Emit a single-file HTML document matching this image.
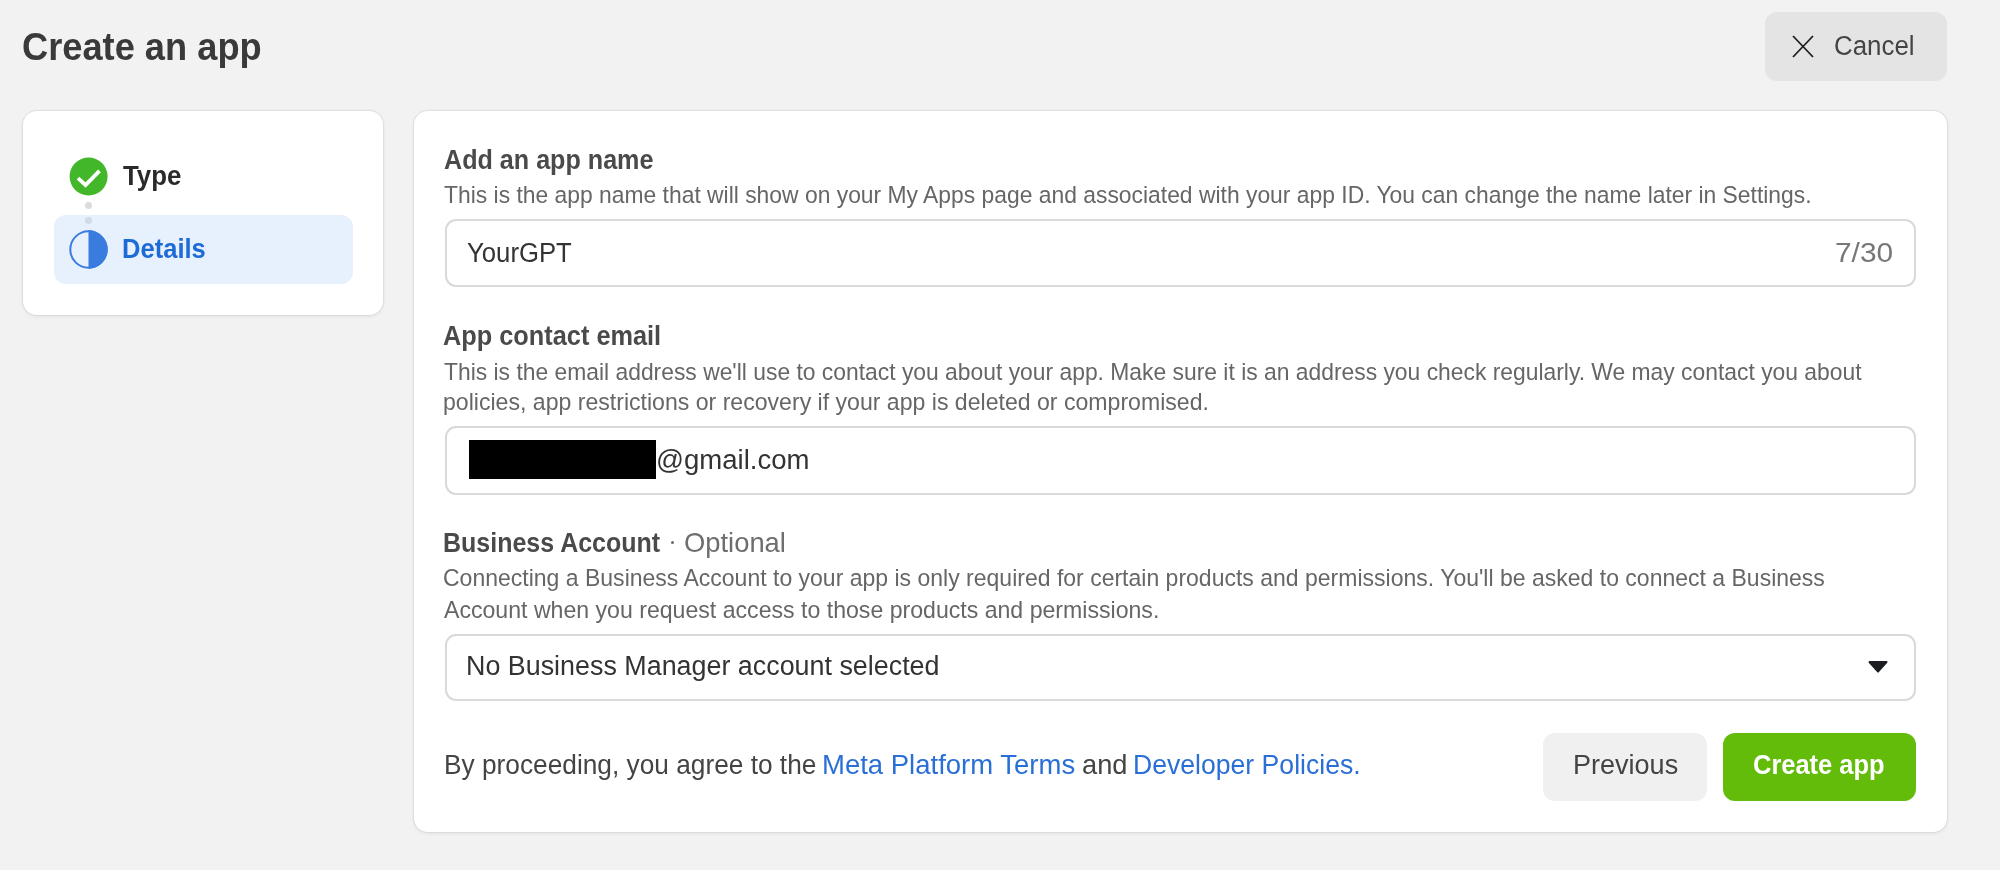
<!DOCTYPE html>
<html><head><meta charset="utf-8">
<style>
html,body{margin:0;padding:0;}
body{width:2000px;height:870px;overflow:hidden;background:#f2f2f2;position:relative;font-family:"Liberation Sans",sans-serif;}
.t{position:absolute;white-space:nowrap;line-height:1;transform-origin:0 0;filter:blur(0.45px);}
.abs{position:absolute;box-sizing:border-box;}
.card{background:#fff;border-radius:14px;box-shadow:0 0 1.5px 1px rgba(0,0,0,0.075),0 1.5px 4px rgba(0,0,0,0.05);}
.inp{background:#fff;border:2px solid #d9d9d9;border-radius:11px;}
</style></head>
<body>
<div class="abs" style="left:1765px;top:12px;width:182px;height:69px;border-radius:12px;background:#e4e4e4;"></div>
<svg class="abs" style="left:1790px;top:34px" width="26" height="25" viewBox="0 0 26 25"><path d="M3 2 L23 23 M23 2 L3 23" stroke="#1c1e21" stroke-width="1.8" fill="none"/></svg>
<div class="abs card" style="left:23px;top:111px;width:360px;height:204px;"></div>
<div class="abs card" style="left:414px;top:111px;width:1533px;height:721px;"></div>
<div class="abs" style="left:54px;top:215px;width:299px;height:69px;border-radius:12px;background:#e7f0fd;"></div>
<svg class="abs" style="left:66px;top:154px" width="45" height="45" viewBox="0 0 45 45"><circle cx="22.6" cy="22.5" r="19" fill="#42b72a"/><path d="M12 24.2 L19.5 31 L33.5 16.8" stroke="#fff" stroke-width="3.8" fill="none" stroke-linecap="butt"/></svg>
<div class="abs" style="left:85px;top:201.5px;width:7px;height:7px;border-radius:50%;background:#dcdcdc;"></div>
<div class="abs" style="left:85px;top:216.5px;width:7px;height:7px;border-radius:50%;background:#d3dae6;"></div>
<svg class="abs" style="left:66px;top:227px" width="45" height="45" viewBox="0 0 45 45"><circle cx="22.5" cy="22.5" r="18.2" fill="none" stroke="#3a7bde" stroke-width="2"/><path d="M22.5 3.3 A19.2 19.2 0 0 1 22.5 41.7 Z" fill="#3a7bde"/></svg>
<div class="abs inp" style="left:445px;top:219px;width:1471px;height:68px;"></div>
<div class="abs inp" style="left:445px;top:426px;width:1471px;height:68.5px;"></div>
<div class="abs" style="left:468.6px;top:440px;width:187.8px;height:39.4px;background:#000;"></div>
<div class="abs inp" style="left:445px;top:633.5px;width:1471px;height:67.5px;"></div>
<svg class="abs" style="left:1866px;top:659px" width="24" height="16" viewBox="0 0 24 16"><path d="M3.5 3 L20.5 3 L12 12.6 Z" fill="#1c1e21" stroke="#1c1e21" stroke-width="2" stroke-linejoin="round"/></svg>
<div class="abs" style="left:1543px;top:732.5px;width:164px;height:68.5px;border-radius:12px;background:#f0f0f0;"></div>
<div class="abs" style="left:1723px;top:732.5px;width:193px;height:68.5px;border-radius:12px;background:#63bc0a;"></div>
<div class="abs" style="left:670.7px;top:540.7px;width:3.8px;height:3.8px;border-radius:50%;background:#6a6a6a;"></div>
<div id="t_title" class="t" style="left:22.12px;top:27.03px;font-size:39.54px;font-weight:700;color:#3a3a3a;transform:scaleX(0.9167)">Create an app</div>
<div id="t_cancel" class="t" style="left:1834.08px;top:30.93px;font-size:28.20px;font-weight:400;color:#444444;transform:scaleX(0.9176)">Cancel</div>
<div id="t_type" class="t" style="left:123.23px;top:161.43px;font-size:28.20px;font-weight:700;color:#2a2a2a;transform:scaleX(0.9161)">Type</div>
<div id="t_details" class="t" style="left:121.57px;top:233.93px;font-size:28.20px;font-weight:700;color:#1d6bd6;transform:scaleX(0.9067)">Details</div>
<div id="t_h1" class="t" style="left:444.10px;top:146.17px;font-size:27.91px;font-weight:700;color:#4a4a4a;transform:scaleX(0.9004)">Add an app name</div>
<div id="t_d1" class="t" style="left:444.00px;top:184.11px;font-size:23.26px;font-weight:400;color:#666666;transform:scaleX(0.9834)">This is the app name that will show on your My Apps page and associated with your app ID. You can change the name later in Settings.</div>
<div id="t_v1" class="t" style="left:467.04px;top:237.93px;font-size:28.20px;font-weight:400;color:#333333;transform:scaleX(0.9123)">YourGPT</div>
<div id="t_cnt" class="t" style="left:1834.50px;top:237.93px;font-size:28.20px;font-weight:400;color:#777777;transform:scaleX(1.0596)">7/30</div>
<div id="t_h2" class="t" style="left:443.09px;top:322.17px;font-size:27.91px;font-weight:700;color:#4a4a4a;transform:scaleX(0.9076)">App contact email</div>
<div id="t_d2a" class="t" style="left:444.00px;top:360.61px;font-size:23.26px;font-weight:400;color:#666666;transform:scaleX(0.9831)">This is the email address we'll use to contact you about your app. Make sure it is an address you check regularly. We may contact you about</div>
<div id="t_d2b" class="t" style="left:443.01px;top:391.11px;font-size:23.26px;font-weight:400;color:#666666;transform:scaleX(0.9928)">policies, app restrictions or recovery if your app is deleted or compromised.</div>
<div id="t_v2" class="t" style="left:656.04px;top:444.93px;font-size:28.20px;font-weight:400;color:#333333;transform:scaleX(0.9778)">@gmail.com</div>
<div id="t_h3" class="t" style="left:443.21px;top:529.17px;font-size:27.91px;font-weight:700;color:#4a4a4a;transform:scaleX(0.8958)">Business Account</div>
<div id="t_opt" class="t" style="left:684.02px;top:529.17px;font-size:27.91px;font-weight:400;color:#6e6e6e;transform:scaleX(0.9802)">Optional</div>
<div id="t_d3a" class="t" style="left:443.01px;top:567.11px;font-size:23.26px;font-weight:400;color:#666666;transform:scaleX(0.9896)">Connecting a Business Account to your app is only required for certain products and permissions. You'll be asked to connect a Business</div>
<div id="t_d3b" class="t" style="left:444.00px;top:598.51px;font-size:23.26px;font-weight:400;color:#666666;transform:scaleX(0.9937)">Account when you request access to those products and permissions.</div>
<div id="t_v3" class="t" style="left:466.09px;top:651.33px;font-size:28.20px;font-weight:400;color:#333333;transform:scaleX(0.9533)">No Business Manager account selected</div>
<div id="t_f1" class="t" style="left:444.12px;top:751.17px;font-size:27.91px;font-weight:400;color:#444444;transform:scaleX(0.9413)">By proceeding, you agree to the</div>
<div id="t_f2" class="t" style="left:822.04px;top:751.17px;font-size:27.91px;font-weight:400;color:#2a6fd6;transform:scaleX(0.9854)">Meta Platform Terms</div>
<div id="t_f3" class="t" style="left:1082.03px;top:751.17px;font-size:27.91px;font-weight:400;color:#444444;transform:scaleX(0.9767)">and</div>
<div id="t_f4" class="t" style="left:1133.09px;top:751.17px;font-size:27.91px;font-weight:400;color:#2a6fd6;transform:scaleX(0.9530)">Developer Policies.</div>
<div id="t_prev" class="t" style="left:1573.00px;top:751.91px;font-size:27.04px;font-weight:400;color:#444444;transform:scaleX(1.0000)">Previous</div>
<div id="t_create" class="t" style="left:1753.06px;top:751.91px;font-size:27.04px;font-weight:700;color:#ffffff;transform:scaleX(0.9420)">Create app</div>
</body></html>
